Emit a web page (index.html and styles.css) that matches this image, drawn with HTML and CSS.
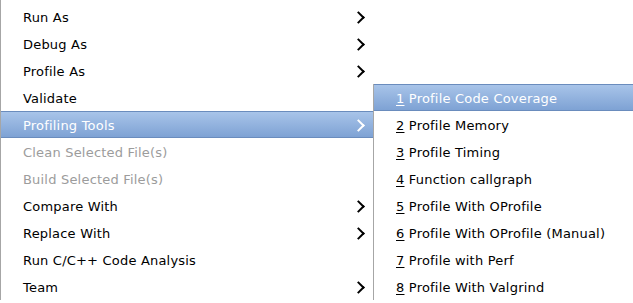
FILE: index.html
```html
<!DOCTYPE html>
<html>
<head>
<meta charset="utf-8">
<link rel="stylesheet" href="styles.css">
</head>
<body>
<div class="screen">
  <ul class="menu main">
    <li class="item"><span class="label">Run As</span><span class="arrow"></span></li>
    <li class="item"><span class="label">Debug As</span><span class="arrow"></span></li>
    <li class="item"><span class="label">Profile As</span><span class="arrow"></span></li>
    <li class="item"><span class="label">Validate</span></li>
    <li class="item active"><span class="label">Profiling Tools</span><span class="arrow"></span></li>
    <li class="item disabled"><span class="label">Clean Selected File(s)</span></li>
    <li class="item disabled"><span class="label">Build Selected File(s)</span></li>
    <li class="item"><span class="label">Compare With</span><span class="arrow"></span></li>
    <li class="item"><span class="label">Replace With</span><span class="arrow"></span></li>
    <li class="item"><span class="label">Run C/C++ Code Analysis</span></li>
    <li class="item"><span class="label">Team</span><span class="arrow"></span></li>
  </ul>
  <ul class="menu sub">
    <li class="item active"><span class="label"><u>1</u> Profile Code Coverage</span></li>
    <li class="item"><span class="label"><u>2</u> Profile Memory</span></li>
    <li class="item"><span class="label"><u>3</u> Profile Timing</span></li>
    <li class="item"><span class="label"><u>4</u> Function callgraph</span></li>
    <li class="item"><span class="label"><u>5</u> Profile With OProfile</span></li>
    <li class="item"><span class="label"><u>6</u> Profile With OProfile (Manual)</span></li>
    <li class="item"><span class="label"><u>7</u> Profile with Perf</span></li>
    <li class="item"><span class="label"><u>8</u> Profile With Valgrind</span></li>
  </ul>
</div>
</body>
</html>
```
FILE: styles.css
```css
html, body {
  margin: 0;
  padding: 0;
  background: #ffffff;
}
.screen {
  display: flex;
  align-items: flex-start;
  width: 633px;
  height: 303px;
  overflow: hidden;
  font-family: "DejaVu Sans", sans-serif;
  font-size: 13px;
  letter-spacing: 0.2px;
  color: #000000;
}
.menu {
  list-style: none;
  margin: 0;
  padding: 0;
  background: #ffffff;
}
.main {
  width: 372px;
  border-left: 1px solid #a6a6a6;
  padding-top: 3px;
  flex: none;
}
.sub {
  flex: 1;
  margin-top: 84px;
  border-left: 1px solid #a6a6a6;
}
.item {
  display: flex;
  align-items: center;
  justify-content: space-between;
  height: 27px;
  box-sizing: border-box;
  padding-left: 22px;
  padding-right: 6px;
  padding-top: 1px;
  white-space: pre;
}
.item u {
  text-decoration-thickness: 1px;
  text-underline-offset: 2px;
}
.item.disabled {
  color: #9c9c9c;
}
.item.active {
  color: #ffffff;
  background: linear-gradient(#a8c4e9, #7ea2d4);
  border-top: 1px solid #6a8cbd;
  border-bottom: 1px solid #6a8cbd;
}
.arrow {
  width: 7px;
  height: 7px;
  border-right: 2.5px solid currentColor;
  border-top: 2.5px solid currentColor;
  transform: rotate(45deg);
  margin-right: 4px;
}
```
